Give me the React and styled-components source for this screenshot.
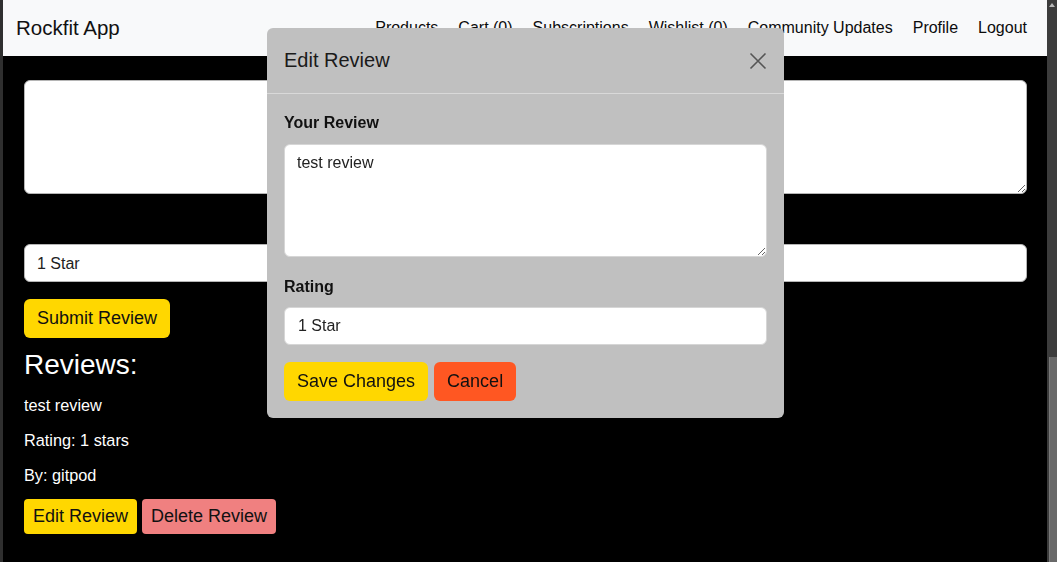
import React from "react";
import styled, { createGlobalStyle } from "styled-components";

const Global = createGlobalStyle`
  html, body { margin: 0; padding: 0; overflow: hidden; background: #000; }
  body { font-family: "Liberation Sans", Arial, sans-serif; }
  * { box-sizing: border-box; }
`;

const Window = styled.div`
  display: flex;
  width: 1057px;
  height: 562px;
  overflow: hidden;
`;

const LeftEdge = styled.div`
  width: 3px;
  background: #2f2f2f;
  flex: none;
`;

const Page = styled.div`
  flex: 1;
  display: flex;
  flex-direction: column;
  background: #000;
  min-width: 0;
`;

const Scrollbar = styled.div`
  width: 10px;
  flex: none;
  background: #3c3c3c;
  display: flex;
  flex-direction: column;
  align-items: flex-end;
`;

const ScrollArrow = styled.div`
  width: 0;
  height: 0;
  margin: 3px 2px 0 0;
  border-left: 3px solid transparent;
  border-right: 3px solid transparent;
  border-bottom: 4px solid #b8b8b8;
`;

const ScrollThumb = styled.div`
  margin-top: 350px;
  width: 8px;
  flex: 1;
  background: #696969;
  border-left: 1px solid #7a7a7a;
`;

const Navbar = styled.nav`
  height: 56px;
  flex: none;
  background: #f8f9fa;
  display: flex;
  align-items: center;
  justify-content: space-between;
  padding: 0 12px 0 13px;
`;

const Brand = styled.span`
  font-size: 20.5px;
  color: #111;
`;

const NavLinks = styled.div`
  display: flex;
  align-items: center;
  gap: 4px;
`;

const NavLink = styled.a`
  font-size: 16px;
  color: #0c0c0c;
  padding: 0 8px;
  text-decoration: none;
`;

const Main = styled.main`
  padding: 24px 20px 0 21px;
  display: flex;
  flex-direction: column;
  align-items: flex-start;
`;

const MainTextArea = styled.textarea`
  width: 100%;
  height: 114px;
  border: 1px solid #b5b5b5;
  border-radius: 6px;
  background: #fff;
  font: inherit;
  font-size: 16px;
  padding: 6px 12px;
  display: block;
`;

const RatingSelect = styled.select`
  appearance: none;
  width: 100%;
  height: 38px;
  margin-top: 50px;
  border: 1px solid #b5b5b5;
  border-radius: 6px;
  background: #fff;
  font-family: inherit;
  font-size: 16px;
  color: #222;
  padding: 0 12px;
`;

const Button = styled.button`
  font-family: inherit;
  font-size: 18px;
  color: #111;
  border: none;
  border-radius: ${(p) => (p.$small ? "4px" : "6px")};
  height: ${(p) => (p.$small ? "35px" : "39px")};
  padding: ${(p) => (p.$small ? "0 9px" : "0 13px")};
  background: ${(p) => p.$bg || "#ffd700"};
  cursor: pointer;
`;

const SubmitButton = styled(Button)`
  margin-top: 17px;
`;

const Heading = styled.h2`
  margin: 12px 0 0;
  font-size: 28px;
  font-weight: normal;
  line-height: 30px;
  color: #fff;
`;

const ReviewText = styled.p`
  margin: 16px 0 0;
  font-size: 16.3px;
  line-height: 19px;
  color: #fff;
`;

const ButtonRow = styled.div`
  display: flex;
  gap: ${(p) => p.$gap || 5}px;
  margin-top: ${(p) => p.$top || 14}px;
`;

const Modal = styled.div`
  position: fixed;
  top: 28px;
  left: 267px;
  width: 517px;
  background: #c0c0c0;
  border-radius: 6px;
  display: flex;
  flex-direction: column;
`;

const ModalHeader = styled.div`
  height: 66px;
  display: flex;
  align-items: center;
  justify-content: space-between;
  padding: 0 17px;
  border-bottom: 1px solid #d9d9d9;
`;

const ModalTitle = styled.h5`
  margin: 0;
  font-size: 20px;
  font-weight: normal;
  color: #1a1a1a;
`;

const CloseButton = styled.button`
  background: none;
  border: none;
  padding: 0;
  width: 18px;
  height: 18px;
  display: flex;
  align-items: center;
  justify-content: center;
  cursor: pointer;
`;

const ModalBody = styled.div`
  padding: 17px 17px 17px;
  display: flex;
  flex-direction: column;
`;

const Label = styled.label`
  font-size: 16px;
  font-weight: bold;
  line-height: 24px;
  color: #111;
  margin: ${(p) => (p.$first ? "0 0 9px" : "18px 0 8px")};
`;

const ModalTextArea = styled.textarea`
  width: 100%;
  height: 113px;
  border: 1px solid #d6d6d6;
  border-radius: 6px;
  background: #fff;
  font-family: inherit;
  font-size: 16px;
  line-height: 24px;
  color: #222;
  padding: 6px 12px;
  display: block;
`;

const ModalInput = styled.input`
  width: 100%;
  height: 38px;
  border: 1px solid #d6d6d6;
  border-radius: 6px;
  background: #fff;
  font-family: inherit;
  font-size: 16px;
  color: #222;
  padding: 0 13px;
`;

export default function App() {
  return (
    <>
      <Global />
      <Window>
        <LeftEdge />
        <Page>
          <Navbar>
            <Brand>Rockfit App</Brand>
            <NavLinks>
              <NavLink>Products</NavLink>
              <NavLink>Cart (0)</NavLink>
              <NavLink>Subscriptions</NavLink>
              <NavLink>Wishlist (0)</NavLink>
              <NavLink>Community Updates</NavLink>
              <NavLink>Profile</NavLink>
              <NavLink>Logout</NavLink>
            </NavLinks>
          </Navbar>
          <Main>
            <MainTextArea defaultValue="" />
            <RatingSelect defaultValue="1">
              <option value="1">1 Star</option>
            </RatingSelect>
            <SubmitButton>Submit Review</SubmitButton>
            <Heading>Reviews:</Heading>
            <ReviewText>test review</ReviewText>
            <ReviewText>Rating: 1 stars</ReviewText>
            <ReviewText>By: gitpod</ReviewText>
            <ButtonRow>
              <Button $small>Edit Review</Button>
              <Button $small $bg="#f08080">Delete Review</Button>
            </ButtonRow>
          </Main>
        </Page>
        <Scrollbar>
          <ScrollArrow />
          <ScrollThumb />
        </Scrollbar>
      </Window>
      <Modal>
        <ModalHeader>
          <ModalTitle>Edit Review</ModalTitle>
          <CloseButton aria-label="Close">
            <svg width="18" height="18" viewBox="0 0 18 18">
              <path d="M1.5 1.5 L16.5 16.5 M16.5 1.5 L1.5 16.5" stroke="#555" strokeWidth="1.6" fill="none" />
            </svg>
          </CloseButton>
        </ModalHeader>
        <ModalBody>
          <Label $first>Your Review</Label>
          <ModalTextArea defaultValue="test review" />
          <Label>Rating</Label>
          <ModalInput defaultValue="1 Star" />
          <ButtonRow $gap={6} $top={17}>
            <Button>Save Changes</Button>
            <Button $bg="#ff5722">Cancel</Button>
          </ButtonRow>
        </ModalBody>
      </Modal>
    </>
  );
}
